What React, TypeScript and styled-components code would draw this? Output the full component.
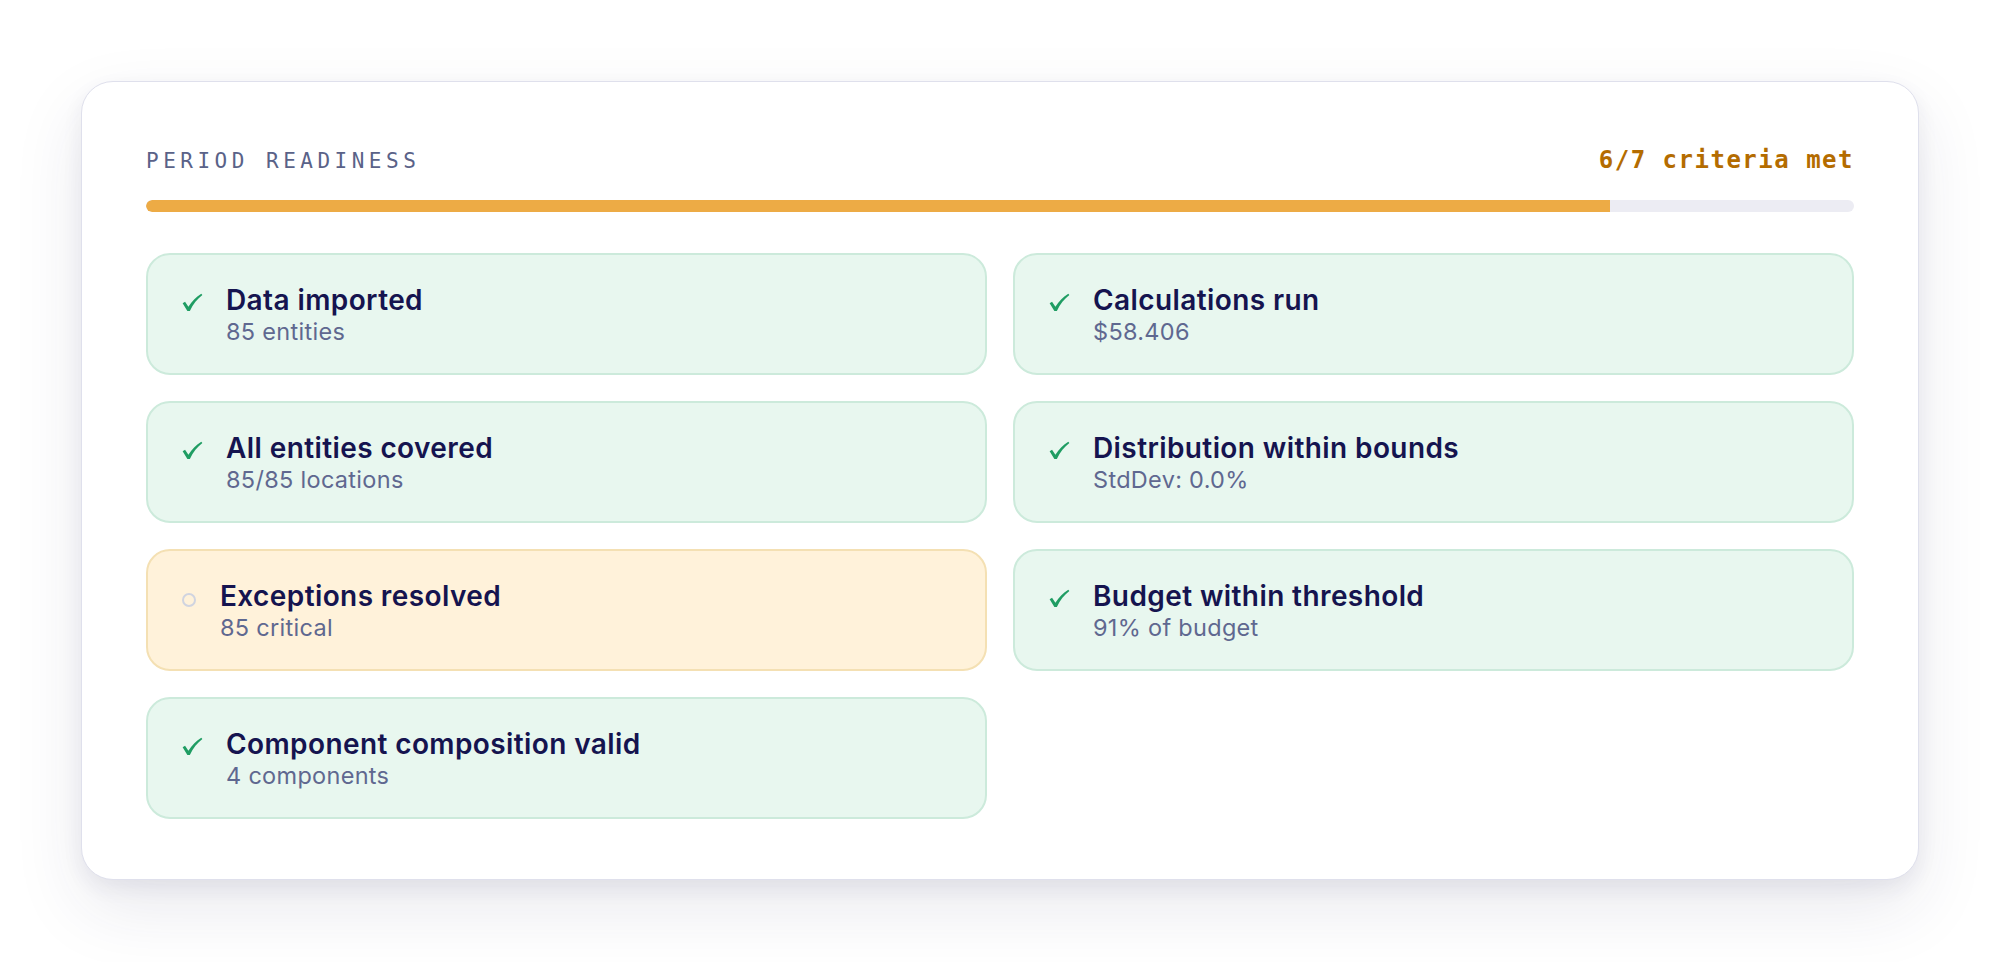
import React from 'react';
import styled, { createGlobalStyle } from 'styled-components';

const GlobalStyle = createGlobalStyle`
  html, body {
    margin: 0;
    padding: 0;
    background: #ffffff;
  }
  * {
    box-sizing: border-box;
  }
`;

const Page = styled.div`
  padding: 81px;
  min-height: 100vh;
  background: #ffffff;
  font-family: Inter, "Noto Sans", sans-serif;
`;

const Panel = styled.section`
  background: #ffffff;
  border: 1px solid #dfe0ec;
  border-radius: 32px;
  padding: 64px 64px 60px;
  box-shadow:
    0 8px 20px rgba(40, 40, 90, 0.07),
    0 28px 70px rgba(40, 40, 90, 0.1);
`;

const Header = styled.div`
  display: flex;
  justify-content: space-between;
  align-items: baseline;
  height: 28px;
`;

const Label = styled.span`
  font-family: "DejaVu Sans Mono", "Liberation Mono", monospace;
  font-size: 21px;
  line-height: 28px;
  letter-spacing: 4.5px;
  color: #5a6288;
  text-transform: uppercase;
`;

const Count = styled.span`
  font-family: "DejaVu Sans Mono", "Liberation Mono", monospace;
  font-size: 24px;
  font-weight: 700;
  line-height: 28px;
  letter-spacing: 1.5px;
  color: #b46c00;
`;

const Track = styled.div`
  margin-top: 26px;
  height: 12px;
  border-radius: 6px;
  background: #ececf3;
  overflow: hidden;
`;

const Fill = styled.div`
  height: 100%;
  background: #edab45;
  border-radius: 6px 0 0 6px;
`;

const Grid = styled.div`
  margin-top: 41px;
  display: grid;
  grid-template-columns: 1fr 1fr;
  gap: 26px;
`;

const Item = styled.div<{ $ok: boolean }>`
  display: flex;
  align-items: flex-start;
  gap: ${(p) => (p.$ok ? '23px' : '24px')};
  padding: 29px 34px 26px;
  border-radius: 24px;
  border: 2px solid ${(p) => (p.$ok ? '#cceadb' : '#f4e0b3')};
  background: ${(p) => (p.$ok ? '#e8f7ef' : '#fff2da')};
`;

const CheckMark = styled.svg`
  width: 21px;
  height: 19px;
  margin-top: 9px;
  flex: none;
  color: #1f9d63;
`;

const Pending = styled.span`
  width: 14px;
  height: 14px;
  margin-top: 13px;
  border-radius: 50%;
  border: 2px solid #d0d4e0;
  flex: none;
`;

const Body = styled.div`
  display: flex;
  flex-direction: column;
`;

const Title = styled.div`
  font-size: 28px;
  font-weight: 600;
  line-height: 32px;
  letter-spacing: 0.4px;
  color: #15144f;
`;

const Detail = styled.div`
  font-size: 23.5px;
  line-height: 31px;
  letter-spacing: 0.3px;
  color: #5f6890;
`;

type Criterion = {
  title: string;
  detail: string;
  ok: boolean;
};

const criteria: Criterion[] = [
  { title: 'Data imported', detail: '85 entities', ok: true },
  { title: 'Calculations run', detail: '$58.406', ok: true },
  { title: 'All entities covered', detail: '85/85 locations', ok: true },
  { title: 'Distribution within bounds', detail: 'StdDev: 0.0%', ok: true },
  { title: 'Exceptions resolved', detail: '85 critical', ok: false },
  { title: 'Budget within threshold', detail: '91% of budget', ok: true },
  { title: 'Component composition valid', detail: '4 components', ok: true },
];

const Check = () => (
  <CheckMark viewBox="0 0 20 18" aria-hidden="true">
    <path
      d="M0.6 9.8 L2.9 8.3 L6.1 13 C9.6 7.6 13.6 3.6 18.4 0.6 L19.4 1.9 C14.6 5.6 10.6 10.6 7.5 17 L5.1 17 Z"
      fill="currentColor"
    />
  </CheckMark>
);

const App: React.FC = () => {
  const met = criteria.filter((c) => c.ok).length;
  const pct = (met / criteria.length) * 100;

  return (
    <>
      <GlobalStyle />
      <Page>
        <Panel>
          <Header>
            <Label>Period readiness</Label>
            <Count>
              {met}/{criteria.length} criteria met
            </Count>
          </Header>
          <Track>
            <Fill style={{ width: `${pct}%` }} />
          </Track>
          <Grid>
            {criteria.map((c) => (
              <Item key={c.title} $ok={c.ok}>
                {c.ok ? <Check /> : <Pending />}
                <Body>
                  <Title>{c.title}</Title>
                  <Detail>{c.detail}</Detail>
                </Body>
              </Item>
            ))}
          </Grid>
        </Panel>
      </Page>
    </>
  );
};

export default App;
